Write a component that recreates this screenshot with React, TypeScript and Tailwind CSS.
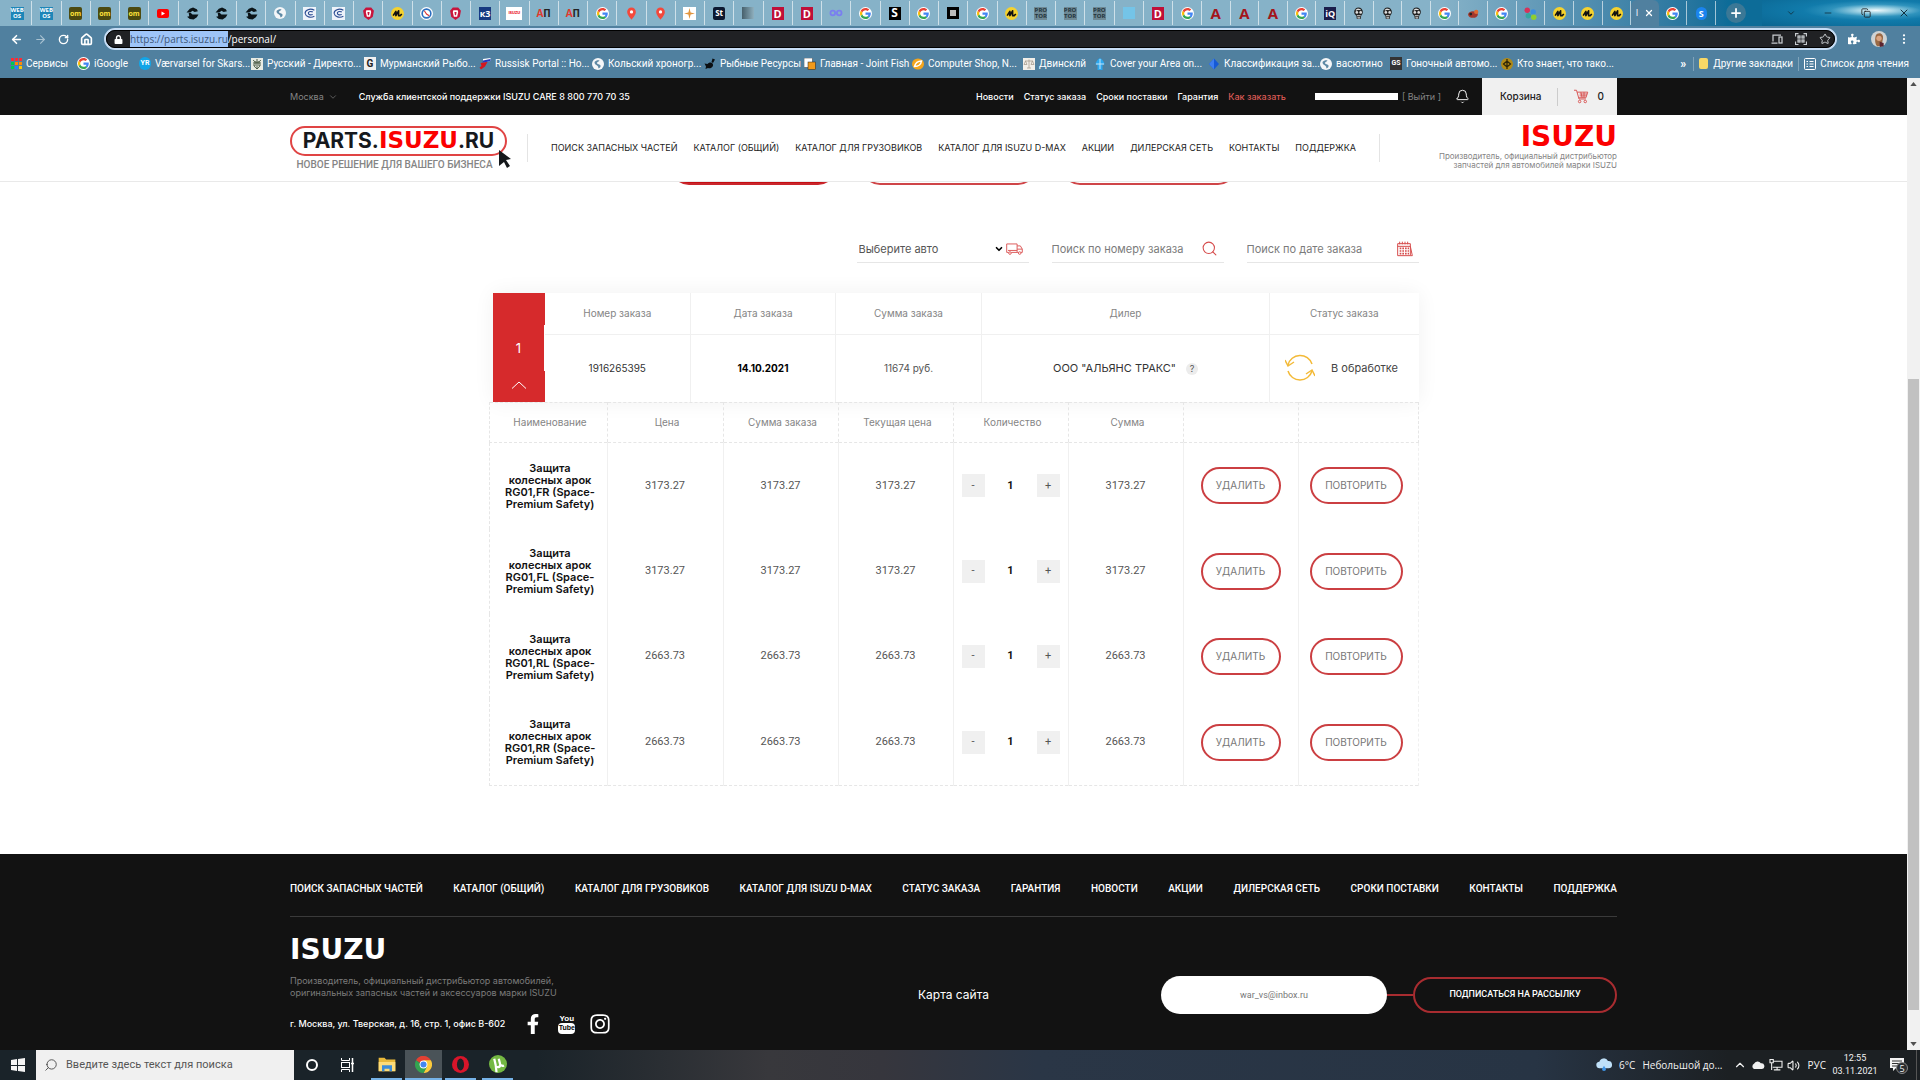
import React from "react";
import {
  ArrowLeft, ArrowRight, RotateCw, House, Star, X, Plus, Bell, Search, ChevronDown, ChevronUp, Minus, Copy, Volume2,
} from "lucide-react";
import { FaFacebookF, FaInstagram, FaPuzzlePiece, FaLock } from "react-icons/fa";
import { BsThreeDotsVertical } from "react-icons/bs";

/* ---------- small drawings ---------- */

const GoogleG = () => (
  <span className="flex size-[13px] items-center justify-center rounded-full bg-white">
    <svg viewBox="0 0 48 48" className="size-[11px]">
      <path fill="#EA4335" d="M24 9.500c3.500 0 6.700 1.200 9.200 3.600l6.900-6.900C35.900 2.400 30.500 0 24 0 14.600 0 6.500 5.400 2.600 13.200l8 6.200C12.400 13.700 17.700 9.500 24 9.500z" />
      <path fill="#4285F4" d="M47 24.500c0-1.600-.2-3.100-.4-4.500H24v9h12.900c-.6 3-2.300 5.500-4.800 7.200l7.700 6C44.400 38 47 32 47 24.500z" />
      <path fill="#FBBC05" d="M10.500 28.600c-.5-1.500-.8-3-.8-4.600s.3-3.100.8-4.600l-8-6.200C.9 16.500 0 20.100 0 24s.9 7.500 2.600 10.800z" />
      <path fill="#34A853" d="M24 48c6.500 0 11.900-2.100 15.900-5.800l-7.700-6c-2.200 1.500-4.900 2.300-8.200 2.300-6.300 0-11.600-4.200-13.500-9.900l-8 6.200C6.500 42.600 14.600 48 24 48z" />
    </svg>
  </span>
);

const Globe = () => (
  <svg viewBox="0 0 24 24" className="size-3">
    <circle cx="12" cy="12" r="12" fill="#f4f6f8" />
    <path d="M5 8c3-4 8-4 10-3-1 3-5 2-5 5s6 2 7 5-2 5-4 6c-1-3 0-4-3-6S5 12 5 8z" fill="#5f8aa5" />
  </svg>
);

const Arrows = () => (
  <svg viewBox="0 0 24 24" className="size-[13px]" fill="#0b1418">
    <path d="M1 10l6-7 6-2 7 3 2 4-6 1-4-2-4 3H5z" />
    <path d="M5 11h4l3 3h11l-3 5-6 4-7-1-5-4 4-1z" />
  </svg>
);

const Pin = () => (
  <svg viewBox="0 0 24 24" className="size-[13px]">
    <path fill="#f4483b" d="M12 1a8 8 0 0 0-8 8c0 6 8 14 8 14s8-8 8-14a8 8 0 0 0-8-8z" />
    <circle cx="12" cy="9" r="3" fill="#fff" />
  </svg>
);

const YouTubeTab = () => (
  <svg viewBox="0 0 24 18" className="h-[9px] w-3">
    <rect width="24" height="18" rx="4" fill="#f00" />
    <path d="M9 5l7 4-7 4z" fill="#fff" />
  </svg>
);

const Squiggle = () => (
  <svg viewBox="0 0 24 24" className="size-[13px]">
    <circle cx="12" cy="12" r="12" fill="#f5d22e" />
    <path d="M4 16l5-8v8l5-9v9h3l3-3" fill="none" stroke="#111" strokeWidth="3" strokeLinejoin="round" />
  </svg>
);

const Shield = () => (
  <svg viewBox="0 0 24 24" className="size-[13px]">
    <path d="M7 1h10l5 6-2 11-8 6-8-6L2 7z" fill="#c8143c" />
    <path d="M8 6h8l1 3-2 9H9L7 9z" fill="#fff" />
    <path d="M10 9h4l-1 6h-2z" fill="#c8143c" />
  </svg>
);

const Eye = () => (
  <svg viewBox="0 0 24 24" className="size-[13px]">
    <rect width="24" height="24" fill="#eef3fa" />
    <path d="M21 6C13 1 3 6 4 12s10 9 17 5M18 9c-5-2-9 0-8 3s5 3 8 2" fill="none" stroke="#2d4e94" strokeWidth="2" />
  </svg>
);

const ClockTab = () => (
  <svg viewBox="0 0 24 24" className="size-[13px]">
    <circle cx="12" cy="12" r="12" fill="#fff" />
    <circle cx="12" cy="12" r="8" fill="none" stroke="#2c6fc0" strokeWidth="3" />
    <path d="M8 7l4 6 5 3" fill="none" stroke="#d33" strokeWidth="2" />
  </svg>
);

const Spark = () => (
  <svg viewBox="0 0 24 24" className="size-[13px]">
    <rect width="24" height="24" fill="#fff" />
    <path d="M12 2l2 8 8 2-8 2-2 8-2-8-8-2 8-2z" fill="#e0953f" />
  </svg>
);

const Infinite = () => (
  <svg viewBox="0 0 24 12" className="h-2 w-3.5" fill="none" stroke="#7a7ff0" strokeWidth="3">
    <circle cx="6.500" cy="6" r="4" /><circle cx="17.500" cy="6" r="4" />
  </svg>
);

const Skull = () => (
  <svg viewBox="0 0 24 24" className="size-[13px]">
    <path d="M4 9a8 8 0 0 1 16 0c0 4-2 5-3 7l-1 6H9l-1-6c-2-2-4-3-4-7z" fill="#222" />
    <path d="M7 6l4-2 5 1" stroke="#ddd" strokeWidth="2" fill="none" />
    <circle cx="9" cy="10" r="2.500" fill="#ddd" /><circle cx="16" cy="10" r="2.500" fill="#ddd" />
    <path d="M9 16h7M10 20h5" stroke="#ddd" strokeWidth="2" />
  </svg>
);

const Fish = () => (
  <svg viewBox="0 0 24 24" className="size-[13px]">
    <ellipse cx="11" cy="14" rx="9" ry="6" fill="#a3372b" />
    <circle cx="17" cy="9" r="4" fill="#e06a32" /><circle cx="7" cy="13" r="2.500" fill="#222" />
  </svg>
);

const Dots = () => (
  <svg viewBox="0 0 24 24" className="size-[13px]">
    <circle cx="6" cy="6" r="5" fill="#d6335a" /><circle cx="17" cy="9" r="5" fill="#3d8de0" />
    <circle cx="8" cy="16" r="5" fill="#35a6a0" /><circle cx="18" cy="19" r="5" fill="#8fce2e" />
  </svg>
);

const Letter = ({ t, c }: { t: string; c: string }) => (
  <span className={"flex h-[13px] items-center justify-center leading-none font-bold " + c}>{t}</span>
);

const Stack = ({ a, b, c }: { a: string; b: string; c: string }) => (
  <span className={"flex size-[13px] flex-col items-center justify-center text-[6px] leading-[6px] font-bold " + c}>
    <span>{a}</span><span>{b}</span>
  </span>
);

const webos = <Stack a="WEB" b="OS" c="bg-[#1d86b8] text-white" />;
const om = <Letter t="om" c="w-[13px] rounded-xs bg-[#4c4a10] text-[7px] text-[#ffe23a]" />;
const ap = <span className="text-[10px] font-bold text-[#222]"><span className="text-[#e03a2e]">А</span>П</span>;
const dd = <Letter t="D" c="w-3 bg-[#c00f38] text-[11px] text-white" />;
const pro = <Stack a="PRO" b="TOR" c="bg-[#6d8894] text-[#23343c]" />;
const aa = <Letter t="A" c="w-3 text-[15px] text-[#a3151b]" />;

const tabsLeft: React.ReactNode[] = [
  webos, webos, om, om, om, <YouTubeTab />, <Arrows />, <Arrows />, <Arrows />, <Globe />, <Eye />, <Eye />, <Shield />,
  <Squiggle />, <ClockTab />, <Shield />, <Letter t="к3" c="w-3 bg-[#173a80] text-[9px] text-white" />,
  <Letter t="ISUZU" c="w-4 bg-white text-[4px] text-red-600" />, ap, ap, <GoogleG />, <Pin />, <Pin />, <Spark />,
  <Letter t="St" c="w-3 rounded-xs bg-[#0c1830] text-[8px] text-white" />,
  <span className="size-3 bg-linear-to-r from-[#47606c] to-[#8fb0bf]" />, dd, dd, <Infinite />, <GoogleG />,
  <Letter t="S" c="w-3 bg-black text-[12px] text-white" />, <GoogleG />,
  <span className="size-3 border-3 border-black bg-[#bbb]" />, <GoogleG />, <Squiggle />, pro, pro, pro,
  <span className="size-3 bg-[#74c4e8]" />, dd, <GoogleG />,
];
const tabsRight: React.ReactNode[] = [
  aa, aa, aa, <GoogleG />, <Letter t="iQ" c="w-3 bg-[#1b1d4a] text-[9px] text-white" />, <Skull />, <Skull />, <Skull />,
  <GoogleG />, <Fish />, <GoogleG />, <Dots />, <Squiggle />, <Squiggle />, <Squiggle />, null, <GoogleG />,
  <Letter t="S" c="w-[11px] rounded-full bg-[#1b84ee] text-[9px] text-white" />,
];

const TabCell = ({ children }: { children: React.ReactNode }) => (
  <div className="my-px flex min-w-0 flex-1 items-center justify-center border-r border-white/60">{children}</div>
);

const AppsGrid = () => (
  <span className="grid size-[11px] grid-cols-3 gap-px">
    {["bg-red-500", "bg-red-500", "bg-red-500", "bg-green-500", "bg-orange-400", "bg-orange-400", "bg-green-500", "bg-blue-500", "bg-yellow-400"].map((c, i) => (
      <span key={i} className={c} />
    ))}
  </span>
);

const bookmarks: { t: string; w: string; i: React.ReactNode }[] = [
  { t: "Сервисы", w: "w-[66px]", i: <AppsGrid /> },
  { t: "iGoogle", w: "w-[62px]", i: <GoogleG /> },
  { t: "Værvarsel for Skars...", w: "w-[112px]", i: <Letter t="YR" c="w-3 rounded-full bg-[#12a5e8] text-[7px] text-white" /> },
  {
    t: "Русский - Директо...", w: "w-[113px]",
    i: <svg viewBox="0 0 24 24" className="size-3"><rect width="24" height="24" fill="#e8ece4" /><path d="M12 2v20M5 4c0 6 14 6 14 0M4 10h16M5 13c2 5 4 6 7 9 3-3 5-4 7-9M8 6v10M16 6v10" fill="none" stroke="#4b5b45" strokeWidth="2" /></svg>,
  },
  { t: "Мурманский Рыбо...", w: "w-[115px]", i: <Letter t="G" c="w-3 bg-[#f0f0f0] text-[10px] text-[#222]" /> },
  {
    t: "Russisk Portal :: Но...", w: "w-[113px]",
    i: <svg viewBox="0 0 24 24" className="size-3"><path d="M8 2l15-2v6L8 9z" fill="#fff" /><path d="M8 5l15-3v4L7 10z" fill="#2438c0" /><path d="M3 10l14-2-5 9-8 6-3-4 4-3z" fill="#d4161e" /></svg>,
  },
  { t: "Кольский хроногр...", w: "w-[112px]", i: <Globe /> },
  {
    t: "Рыбные Ресурсы", w: "w-[100px]",
    i: <svg viewBox="0 0 24 24" className="size-3"><path d="M1 11l6 1c5-5 10-3 11 1s-4 9-10 7l-5 2 1-5zM17 1l5 2-4 7-3-2z" fill="#0b0f12" /></svg>,
  },
  {
    t: "Главная - Joint Fish", w: "w-[108px]",
    i: <svg viewBox="0 0 24 24" className="size-3"><rect width="17" height="19" fill="#fff" stroke="#333" /><rect x="8" y="8" width="15" height="15" fill="#f29a1b" stroke="#222" /></svg>,
  },
  {
    t: "Computer Shop, N...", w: "w-[111px]",
    i: <svg viewBox="0 0 24 24" className="size-3"><ellipse cx="12" cy="12" rx="12" ry="11" fill="#f4a51c" /><path d="M5 17c2-8 8-11 14-11-1 7-7 11-14 11z" fill="none" stroke="#fff" strokeWidth="3" /></svg>,
  },
  {
    t: "Двинсклй", w: "w-[71px]",
    i: <svg viewBox="0 0 24 24" className="size-3"><rect width="24" height="24" fill="#f2efe9" /><path d="M12 3v17M8 20h8M4 6h16M5 6l-3 7h6zM19 6l-3 7h6z" fill="none" stroke="#a39a8c" strokeWidth="1.500" /></svg>,
  },
  {
    t: "Cover your Area on...", w: "w-[114px]",
    i: <svg viewBox="0 0 24 24" className="size-3"><path d="M12 0c5 3 9 8 9 13H3C3 8 7 3 12 0zM7 13h10v11H7z" fill="#2ca7ef" /><path d="M12 2v20M4 12h16" stroke="#bfe4fb" strokeWidth="2" /></svg>,
  },
  {
    t: "Классификация за...", w: "w-[112px]",
    i: <svg viewBox="0 0 24 24" className="size-3"><path d="M12 1l10 11-10 11L2 12z" fill="#1559d6" /><path d="M12 1v22L2 12z" fill="#3d7df0" /></svg>,
  },
  { t: "васютино", w: "w-[70px]", i: <Globe /> },
  { t: "Гоночный автомо...", w: "w-[111px]", i: <Letter t="GS" c="w-3 bg-[#333] text-[7px] text-white" /> },
  {
    t: "Кто знает, что тако...", w: "w-[110px]",
    i: <svg viewBox="0 0 24 24" className="size-3"><circle cx="12" cy="12" r="12" fill="#b08a17" /><path d="M12 2v20M5 12l7-6 7 6-7 6z" fill="none" stroke="#2e2608" strokeWidth="2.500" /></svg>,
  },
];

/* ---------- browser frame ---------- */

function BrowserFrame() {
  return (
    <div className="bg-[#50809f] font-['Open_Sans',sans-serif] text-white">
      <div className="flex h-[26px] bg-linear-to-r from-[#86b2c8] from-75% to-[#0d6c98] to-90%">
        <div className="ml-[3px] flex w-[1199px]">{tabsLeft.map((n, i) => <TabCell key={i}>{n}</TabCell>)}</div>
        <div className="flex w-[514px]">
          {tabsRight.map((n, i) =>
            n ? <TabCell key={i}>{n}</TabCell> : (
              <div key={i} className="flex flex-1 items-center justify-center gap-1.5 rounded-t-md bg-[#50809f] text-[9px]">
                <span>I</span><X className="size-2.5" strokeWidth={3} />
              </div>
            ))}
        </div>
        <button aria-label="Новая вкладка" className="my-auto ml-2.5 flex size-5 items-center justify-center rounded-full bg-[#3b7896]"><Plus className="size-3.5" strokeWidth={3} /></button>
        <div className="ml-4 flex flex-1 items-center justify-between bg-[radial-gradient(ellipse_at_72%_40%,#f2fafc_0%,#9fd2e4_12%,#2f93bd_28%,#117bab_45%,#0a6591_100%)] pr-2.5 pl-6 text-[#12303f]">
          <ChevronDown className="size-2.5" /><Minus className="size-2.5" /><Copy className="size-2.5 text-[#222]" /><X className="size-3" />
        </div>
      </div>
      <div className="flex h-[26px] items-center gap-[11px] px-2.5">
        <button aria-label="Назад"><ArrowLeft className="size-[13px]" strokeWidth={3} /></button>
        <button aria-label="Вперёд"><ArrowRight className="size-[13px] text-[#a9c2d1]" strokeWidth={2} /></button>
        <button aria-label="Обновить"><RotateCw className="size-[11px]" strokeWidth={3} /></button>
        <button aria-label="Домой"><House className="size-[13px]" strokeWidth={3} /></button>
        <div className="flex h-[22px] flex-1 items-center rounded-full border-2 border-[#c6dcf4] bg-[#202124] pr-1 pl-2 outline-1 -outline-offset-3 outline-black">
          <FaLock className="mr-[7px] size-[9px]" />
          <span className="bg-[#9ec5f8] text-[10px] leading-[18px] text-[#3f5878]">https://parts.isuzu.ru</span>
          <span className="flex-1 text-[10px] leading-[18px]">/personal/</span>
          <span className="flex items-center gap-3 text-[#c8ccd0]">
            <svg viewBox="0 0 24 24" className="size-3" fill="none" stroke="currentColor" strokeWidth="2.500"><path d="M20 4H4v13M1 20h12" /><rect x="16" y="8" width="6" height="12" /></svg>
            <svg viewBox="0 0 24 24" className="size-3" fill="none" stroke="currentColor" strokeWidth="2.500"><path d="M1 7V1h6M17 1h6v6M23 17v6h-6M7 23H1v-6" /><rect x="6" y="6" width="4" height="4" /><rect x="14" y="6" width="4" height="4" /><rect x="6" y="14" width="4" height="4" /><rect x="14" y="14" width="4" height="4" /></svg>
            <Star className="size-3" strokeWidth={2} />
          </span>
        </div>
        <FaPuzzlePiece className="size-3" />
        <svg viewBox="0 0 24 24" className="size-4"><circle cx="12" cy="12" r="12" fill="#cfd3d4" /><path d="M7 7c3-6 12-4 11 4s-3 12-7 12-6-8-4-16z" fill="#9a6a45" /><circle cx="12" cy="11" r="4" fill="#dba683" /><path d="M13 16l6 2v5l-6 1z" fill="#5a2430" /></svg>
        <BsThreeDotsVertical className="size-3" />
      </div>
      <div className="flex h-[26px] items-center pb-[3px] pl-[11px] font-['Roboto',sans-serif] text-[10px] whitespace-nowrap">
        {bookmarks.map((b) => (
          <a key={b.t} href="#" className={"flex shrink-0 items-center gap-1 [&>:first-child]:shrink-0 " + b.w}>{b.i}<span>{b.t}</span></a>
        ))}
        <div className="ml-auto flex items-center gap-[5px] pr-[11px]">
          <span className="mr-0.5 text-[12px] font-bold">»</span>
          <span className="h-3.5 w-px bg-[#7fa3ba]" />
          <a href="#" className="flex items-center gap-[5px]"><span className="h-[11px] w-[9px] rounded-xs bg-[#f8d866]" />Другие закладки</a>
          <span className="h-3.5 w-px bg-[#7fa3ba]" />
          <a href="#" className="flex items-center gap-1">
            <svg viewBox="0 0 24 24" className="size-3" fill="none" stroke="currentColor" strokeWidth="2"><rect x="1" y="1" width="22" height="22" rx="2" /><path d="M5 7h3M5 12h3M5 17h3M11 7h8M11 12h8M11 17h8" /></svg>
            Список для чтения
          </a>
        </div>
      </div>
    </div>
  );
}

/* ---------- site header ---------- */

const CartIcon = () => (
  <svg viewBox="0 0 24 24" className="size-[15px]" fill="none" stroke="#d8504f" strokeWidth="1.500">
    <path d="M0 2h4l4 14h11M5 5h17l-3 9H8M9 8h12M9 11h11M11 5l2 9M16 5v9" /><circle cx="9" cy="20" r="2" /><circle cx="18" cy="20" r="2" />
  </svg>
);

const mainNav = ["ПОИСК ЗАПАСНЫХ ЧАСТЕЙ", "КАТАЛОГ (ОБЩИЙ)", "КАТАЛОГ ДЛЯ ГРУЗОВИКОВ", "КАТАЛОГ ДЛЯ ISUZU D-MAX", "АКЦИИ", "ДИЛЕРСКАЯ СЕТЬ", "КОНТАКТЫ", "ПОДДЕРЖКА"];

function SiteHeader() {
  return (
    <header>
      <div className="flex h-[37px] items-center bg-[#121212] px-[290px] text-[9px] font-medium whitespace-nowrap text-white">
        <button className="flex items-center gap-1 font-normal text-[#858585]">Москва <ChevronDown className="size-2.5" strokeWidth={1.5} /></button>
        <span className="ml-[21px]">Служба клиентской поддержки ISUZU CARE 8 800 770 70 35</span>
        <nav className="ml-auto flex gap-2.5">
          <a href="#">Новости</a><a href="#">Статус заказа</a><a href="#">Сроки поставки</a><a href="#">Гарантия</a>
          <a href="#" className="text-[#dc5a55]">Как заказать</a>
        </nav>
        <span className="ml-[29px] h-[7px] w-[83px] bg-white" />
        <a href="#" className="ml-1 font-normal text-[#858585]">[ Выйти ]</a>
        <button aria-label="Уведомления" className="ml-3.5"><Bell className="size-[15px]" strokeWidth={1.5} /></button>
        <a href="#" className="ml-3 flex h-full w-[135px] items-center bg-[#f0f0f0] pl-[18px] text-[10px] text-[#222]">
          Корзина<span className="mr-4 ml-4 h-[18px] w-px bg-[#ccc]" /><CartIcon /><span className="ml-2">0</span>
        </a>
      </div>
      <div className="flex h-[67px] items-center border-b border-[#e9e9e9] bg-white px-[290px] whitespace-nowrap">
        <a href="#" className="relative w-[217px]">
          <span className="flex h-[30px] items-center justify-center rounded-full border-2 border-[#e04444] text-[21px] font-bold text-[#16191d]">
            PARTS.<span className="font-['DejaVu_Sans',sans-serif] text-[23px] leading-none text-[#fb0000]">ISUZU</span>.RU
          </span>
          <span className="mt-0.5 block pr-2 text-center font-['Roboto',sans-serif] text-[10px] leading-[13px] font-medium text-[#858585]">НОВОЕ РЕШЕНИЕ ДЛЯ ВАШЕГО БИЗНЕСА</span>
          <svg viewBox="0 0 12 18" className="absolute top-6 -right-1 h-[18px] w-3"><path d="M0 0l12 9-5 1 4 6-3 2-3-6-5 4z" fill="#15181b" /></svg>
        </a>
        <span className="ml-5 h-7 w-px bg-[#e4e4e4]" />
        <nav className="ml-[23px] flex gap-4 text-[9px] text-[#222]">
          {mainNav.map((n) => <a key={n} href="#">{n}</a>)}
        </nav>
        <span className="ml-auto h-7 w-px bg-[#e4e4e4]" />
        <div className="ml-[59px] text-right text-[8px] leading-[9px] text-[#858585]">
          <div className="mb-1 font-['DejaVu_Sans',sans-serif] text-[28px] leading-[22px] font-bold text-[#fb0000]">ISUZU</div>
          Производитель, официальный дистрибьютор<br />запчастей для автомобилей марки ISUZU
        </div>
      </div>
    </header>
  );
}

/* ---------- orders ---------- */

const TruckIcon = () => (
  <svg viewBox="0 0 26 20" className="h-[13px] w-[17px]" fill="none" stroke="#dc5a5a" strokeWidth="1.500">
    <path d="M1 3h16v13H8M1 3v13h3M17 6h5l3 5v5h-2M17 16h2M3 13h14M17 11h8" /><circle cx="6" cy="17" r="2" /><circle cx="21" cy="17" r="2" />
  </svg>
);
const CalendarIcon = () => (
  <svg viewBox="0 0 24 24" className="size-4" fill="none" stroke="#d64c4c" strokeWidth="1.500">
    <path d="M1 4h19v18H1zM1 8h19M20 8l3 14h-3M4 1v4M8 1v4M12 1v4M16 1v4" /><path d="M4 11h14M4 15h14M4 19h14" strokeDasharray="2.500 1.500" strokeWidth="2.500" />
  </svg>
);
const RefreshIcon = () => (
  <svg viewBox="0 0 30 28" className="h-7 w-[30px]" fill="none" stroke="#f3ba38" strokeWidth="1.500">
    <path d="M3 11A12.500 12.500 0 0 1 27 10M27 17A12.500 12.500 0 0 1 3 17" /><path d="M0 6l3 6 6-4M30 22l-3-6-6 4" />
  </svg>
);

const items = [
  { n: "FR", p: "3173.27" }, { n: "FL", p: "3173.27" }, { n: "RL", p: "2663.73" }, { n: "RR", p: "2663.73" },
];
const detailHeads = ["Наименование", "Цена", "Сумма заказа", "Текущая цена", "Количество", "Сумма", "", ""];

function Orders() {
  return (
    <main className="bg-white">
      <div className="flex h-[3px] items-end justify-center gap-[26px] overflow-hidden">
        <span className="h-9 w-[165px] shrink-0 rounded-full border-2 border-[#c9272c] bg-[#c50d12]" />
        <span className="h-9 w-[174px] shrink-0 rounded-full border-2 border-[#cf4548]" />
        <span className="h-9 w-[174px] shrink-0 rounded-full border-2 border-[#cf4548]" />
      </div>
      <div className="mx-auto mb-[68px] w-full max-w-[930px] pt-[50px]">
        <form className="flex justify-end gap-[23px] text-[11px] text-[#555]">
          <label className="flex h-7 w-[172px] items-center border-b border-[#e6e6e6]">
            <select aria-label="Выберите авто" className="h-full min-w-0 flex-1 appearance-none pt-0.5 pl-0.5"><option>Выберите авто</option></select>
            <ChevronDown className="mr-0.5 size-2.5 text-black" strokeWidth={4} /><span className="mr-1.5"><TruckIcon /></span>
          </label>
          <label className="flex h-7 w-[172px] items-center border-b border-[#e6e6e6]">
            <input aria-label="Поиск по номеру заказа" placeholder="Поиск по номеру заказа" className="min-w-0 flex-1 pt-0.5 placeholder:text-[#7b7b7b]" />
            <Search className="mr-1.5 size-[17px] text-[#d64c4c]" strokeWidth={1.5} />
          </label>
          <label className="flex h-7 w-[172px] items-center border-b border-[#e6e6e6]">
            <input aria-label="Поиск по дате заказа" placeholder="Поиск по дате заказа" className="min-w-0 flex-1 pt-0.5 placeholder:text-[#7b7b7b]" />
            <span className="mr-1.5"><CalendarIcon /></span>
          </label>
        </form>

        <div className="mt-[30px] ml-1 bg-white shadow-[0_0_20px_rgba(0,0,0,0.06)]">
          <table className="w-full table-fixed text-center">
            <colgroup><col className="w-[52px]" /><col className="w-[146px]" /><col className="w-[145px]" /><col className="w-[146px]" /><col className="w-[288px]" /><col /></colgroup>
            <tbody>
              <tr className="h-[41px] text-[10px] text-[#858585] [&>th]:border-b [&>th]:border-[#f0f0f0] [&>th]:font-normal">
                <td rowSpan={2} className="relative bg-[#d62a2c] pt-[47px] align-top text-white">
                  <div className="text-[13px] leading-4">1</div>
                  <button aria-label="Свернуть" className="mt-[25px] block w-full"><svg viewBox="0 0 14 8" className="mx-auto h-2 w-3.5" fill="none" stroke="#fff"><path d="M0 7.500l7-6.500 7 6.500" /></svg></button>
                  <span className="absolute top-8 right-0 h-[46px] w-px bg-white" />
                </td>
                <th>Номер заказа</th><th className="border-x">Дата заказа</th><th className="border-r">Сумма заказа</th><th className="border-r">Дилер</th><th>Статус заказа</th>
              </tr>
              <tr className="h-[68px] text-[11px] text-[#333] [&>td]:border-[#f0f0f0]">
                <td className="text-[10px]">1916265395</td>
                <td className="border-x text-[10px] font-bold text-black">14.10.2021</td>
                <td className="border-r text-[10px] text-[#555]">11674 руб.</td>
                <td className="border-r">ООО "АЛЬЯНС ТРАКС"<span className="ml-2.5 inline-flex size-3 items-center justify-center rounded-full bg-[#ececec] text-[9px] text-[#555]">?</span></td>
                <td><span className="flex items-center pl-[15px] text-[#444]"><RefreshIcon /><span className="ml-4">В обработке</span></span></td>
              </tr>
            </tbody>
          </table>
        </div>

        <table className="h-[384px] w-full table-fixed border border-dashed border-[#e6e6e6] text-center">
          <colgroup><col className="w-[118px]" /><col className="w-[116px]" /><col className="w-[115px]" /><col className="w-[115px]" /><col className="w-[115px]" /><col className="w-[115px]" /><col className="w-[115px]" /><col /></colgroup>
          <thead>
            <tr className="h-10 text-[10px] text-[#858585]">
              {detailHeads.map((h, i) => <th key={i} className="border border-t-0 border-dashed border-[#e6e6e6] pb-px pl-1 font-normal">{h}</th>)}
            </tr>
          </thead>
          <tbody>
            {items.map((r) => (
              <tr key={r.n} className="font-['Roboto',sans-serif] text-[11px] text-[#555] [&>td]:border-r [&>td]:border-[#f0f0f0] [&>td:last-child]:border-dashed">
                <td className="pl-1 font-['Inter',sans-serif] leading-3 font-semibold text-[#111]">Защита<br />колесных арок<br />RG01,{r.n} (Space-<br />Premium Safety)</td>
                <td>{r.p}</td><td>{r.p}</td><td>{r.p}</td>
                <td>
                  <span className="flex items-center justify-between px-2">
                    <button aria-label="Меньше" className="size-[23px] bg-[#f0f0f0]">-</button>
                    <span className="font-bold text-[#111]">1</span>
                    <button aria-label="Больше" className="size-[23px] bg-[#f0f0f0]">+</button>
                  </span>
                </td>
                <td>{r.p}</td>
                <td><button className="h-[37px] w-20 rounded-[19px] border-2 border-[#cb3f42] font-['Inter',sans-serif] text-[10px] text-[#777]">УДАЛИТЬ</button></td>
                <td className="pr-1"><button className="h-[37px] w-[93px] rounded-[19px] border-2 border-[#cb3f42] font-['Inter',sans-serif] text-[10px] text-[#777]">ПОВТОРИТЬ</button></td>
              </tr>
            ))}
          </tbody>
        </table>
      </div>
    </main>
  );
}

/* ---------- footer ---------- */

const footNav = ["ПОИСК ЗАПАСНЫХ ЧАСТЕЙ", "КАТАЛОГ (ОБЩИЙ)", "КАТАЛОГ ДЛЯ ГРУЗОВИКОВ", "КАТАЛОГ ДЛЯ ISUZU D-MAX", "СТАТУС ЗАКАЗА", "ГАРАНТИЯ", "НОВОСТИ", "АКЦИИ", "ДИЛЕРСКАЯ СЕТЬ", "СРОКИ ПОСТАВКИ", "КОНТАКТЫ", "ПОДДЕРЖКА"];

function SiteFooter() {
  return (
    <footer className="flex-1 bg-[#121212] px-[290px] whitespace-nowrap text-white">
      <nav className="flex h-[63px] items-center justify-between border-b border-[#3a3a3a] pt-1.5 font-['Roboto',sans-serif] text-[10px] font-medium">
        {footNav.map((n) => <a key={n} href="#">{n}</a>)}
      </nav>
      <div className="flex justify-between pt-[22px]">
        <div className="w-[456px]">
          <div className="font-['DejaVu_Sans',sans-serif] text-[28px] leading-[22px] font-bold">ISUZU</div>
          <p className="mt-3.5 text-[9px] leading-3 text-[#7b7b7b]">Производитель, официальный дистрибьютор автомобилей,<br />оригинальных запасных частей и аксессуаров марки ISUZU</p>
          <div className="mt-3.5 flex items-center text-[9px] leading-5 font-medium">
            <span>г. Москва, ул. Тверская, д. 16, стр. 1, офис В-602</span>
            <a href="#" aria-label="Facebook" className="ml-[19px]"><FaFacebookF className="h-5 w-[18px]" /></a>
            <a href="#" className="ml-4 flex flex-col items-center font-['Liberation_Sans',sans-serif] text-[8px] leading-[8px] font-bold">
              <span>You</span><span className="flex h-[11px] w-[17px] items-center justify-center rounded-sm bg-white text-[7px] text-black">Tube</span>
            </a>
            <a href="#" aria-label="Instagram" className="ml-3.5"><FaInstagram className="size-[22px]" /></a>
          </div>
        </div>
        <a href="#" className="mt-[48px] text-[12px] leading-4">Карта сайта</a>
        <form className="mt-[37px] flex h-[38px] items-center">
          <input aria-label="E-mail" defaultValue="war_vs@inbox.ru" className="h-[38px] w-[226px] rounded-[19px] bg-white text-center font-['Roboto',sans-serif] text-[9px] text-[#777]" />
          <span className="h-0.5 w-[26px] bg-[#a82c30]" />
          <button type="button" className="h-9 w-[204px] rounded-[18px] border-2 border-[#a82c30] font-['Roboto',sans-serif] text-[9px] font-medium">ПОДПИСАТЬСЯ НА РАССЫЛКУ</button>
        </form>
      </div>
    </footer>
  );
}

/* ---------- taskbar ---------- */

function Taskbar() {
  return (
    <div className="flex h-[30px] items-center bg-[linear-gradient(90deg,#1a2329_28%,#38383c_40%,#36363d_46%,#2a3646_54%,#273444_80%,#1c2023_90%)] font-['Open_Sans',sans-serif] text-[10px] whitespace-nowrap text-[#f2f2f2]">
      <button aria-label="Пуск" className="flex w-9 justify-center">
        <svg viewBox="0 0 14 14" className="size-3.5" fill="#f4f4f4"><path d="M0 2l6-1v6H0zM7 1l7-1v7H7zM0 8h6v5l-6-1zM7 8h7v6l-7-1z" /></svg>
      </button>
      <label className="flex h-full w-[258px] items-center bg-[#f0f0f0] pl-2 text-[#444]">
        <Search className="mr-2 size-3.5 -scale-x-100" strokeWidth={1.5} />
        <input aria-label="Поиск" placeholder="Введите здесь текст для поиска" className="min-w-0 flex-1 font-['Roboto',sans-serif] text-[11px] placeholder:text-[#555]" />
      </label>
      <span className="flex w-[36px] justify-center"><span className="size-3 rounded-full border-2 border-white" /></span>
      <span className="flex w-[36px] justify-center">
        <svg viewBox="0 0 14 14" className="size-3.5" fill="none" stroke="#fff"><path d="M.5 0v2.500h8V0M.5 14v-2.500h8V14" /><rect x=".5" y="4.500" width="8" height="5" /><path d="M11.500 0v14M10 5.500h3" strokeWidth="1.500" /></svg>
      </span>
      <span className="ml-0.5 flex h-full w-[37px] flex-col items-center">
        <svg viewBox="0 0 20 18" className="my-auto h-[15px] w-[18px]"><path d="M0 1h7l2 2h11v14H0z" fill="#e9b93a" /><path d="M0 6h20v11H0z" fill="#fddc78" /><path d="M4 17v-7h12v7h-3v-3H7v3z" fill="#3c8cd8" /></svg>
        <span className="h-0.5 w-[31px] bg-[#76b3e8]" />
      </span>
      <span className="flex h-full w-[37px] flex-col items-center bg-[#4a5358]">
        <svg viewBox="0 0 24 24" className="my-auto size-[17px]">
          <path d="M12 12L1.600 6A12 12 0 0 1 22.400 6z" fill="#e34133" /><path d="M12 12V0a12 12 0 0 0-10.400 6z" fill="#e34133" />
          <path d="M22.400 6A12 12 0 0 1 12 24l5-10-5-8z" fill="#fccb3c" /><path d="M1.600 6A12 12 0 0 0 12 24l5-9-5-1z" fill="#34a350" />
          <circle cx="12" cy="12" r="5.500" fill="#fff" /><circle cx="12" cy="12" r="4.300" fill="#4286f0" />
        </svg>
        <span className="h-0.5 w-full bg-[#76b3e8]" />
      </span>
      <span className="flex h-full w-[37px] flex-col items-center">
        <svg viewBox="0 0 24 24" className="my-auto size-[17px]"><ellipse cx="12" cy="12" rx="12" ry="12" fill="#d8152a" /><ellipse cx="12" cy="12" rx="5" ry="8.500" fill="#1a2329" /></svg>
        <span className="h-0.5 w-[31px] bg-[#76b3e8]" />
      </span>
      <span className="flex h-full w-[37px] flex-col items-center">
        <svg viewBox="0 0 24 24" className="my-auto size-[18px]"><circle cx="12" cy="12" r="12" fill="#74b843" /><path d="M7 5l2 9c1 3 6 3 6-1l-2-8M16 13c1 2 2 2 4 1M9 14l1 9" fill="none" stroke="#fff" strokeWidth="3" /></svg>
        <span className="h-0.5 w-[31px] bg-[#76b3e8]" />
      </span>
      <div className="ml-auto flex h-full items-center">
        <svg viewBox="0 0 24 20" className="mr-[7px] h-3.5 w-4"><path d="M6 15a5 5 0 0 1-1-10 7 7 0 0 1 13-1 5.500 5.500 0 0 1 1 11z" fill="#bfe0f8" /><path d="M12 11l3 5a3 3 0 1 1-6 0z" fill="#3f94e6" /></svg>
        <span>6°C</span><span className="ml-[7px]">Небольшой до...</span>
        <ChevronUp className="ml-2.5 size-3.5" strokeWidth={2} />
        <svg viewBox="0 0 24 14" className="ml-1 h-2 w-3.5" fill="#f0f0f0"><path d="M5 14a5 5 0 0 1 0-9 7 7 0 0 1 12-1 5 5 0 0 1 2 10z" /></svg>
        <svg viewBox="0 0 24 22" className="ml-1 h-3 w-3.5" fill="none" stroke="#f0f0f0" strokeWidth="2"><path d="M8 4h15v11H6M14 15v5M8 20h12M1 1h6v6H1zM4 7v13" /></svg>
        <Volume2 className="ml-1 size-[13px]" strokeWidth={2} />
        <span className="ml-2">РУС</span>
        <span className="ml-2 flex w-[42px] flex-col items-center font-['Roboto',sans-serif] text-[9px] leading-[13px]"><span>12:55</span><span>03.11.2021</span></span>
        <span className="relative mr-3 ml-3.5">
          <svg viewBox="0 0 14 14" className="size-3.5"><path d="M0 0h14v10H6l-3 3v-3H0z" fill="#f4f4f4" /><path d="M2 3h10M2 5.500h10M2 8h6" stroke="#333" /></svg>
          <span className="absolute top-1 left-1.5 flex size-3 items-center justify-center rounded-full border border-[#888] bg-[#2a2d30] text-[9px] leading-none">5</span>
        </span>
        <span className="mr-[3px] h-full w-px bg-[#555]" />
      </div>
    </div>
  );
}

export default function App() {
  return (
    <div className="flex min-h-screen flex-col font-['Inter',sans-serif]">
      <BrowserFrame />
      <div className="flex flex-1">
        <div className="flex min-w-0 flex-1 flex-col"><SiteHeader /><Orders /><SiteFooter /></div>
        <div className="flex w-[13px] flex-col items-center bg-[#f1f1f1] py-1">
          <svg viewBox="0 0 8 5" className="h-1 w-[7px]"><path d="M0 5l4-5 4 5z" fill="#505050" /></svg>
          <div className="flex-[291]" /><div className="w-[11px] flex-[625] bg-[#c1c1c1]" /><div className="flex-[32]" />
          <svg viewBox="0 0 8 5" className="h-1 w-[7px]"><path d="M0 0l4 5 4-5z" fill="#505050" /></svg>
        </div>
      </div>
      <Taskbar />
    </div>
  );
}
